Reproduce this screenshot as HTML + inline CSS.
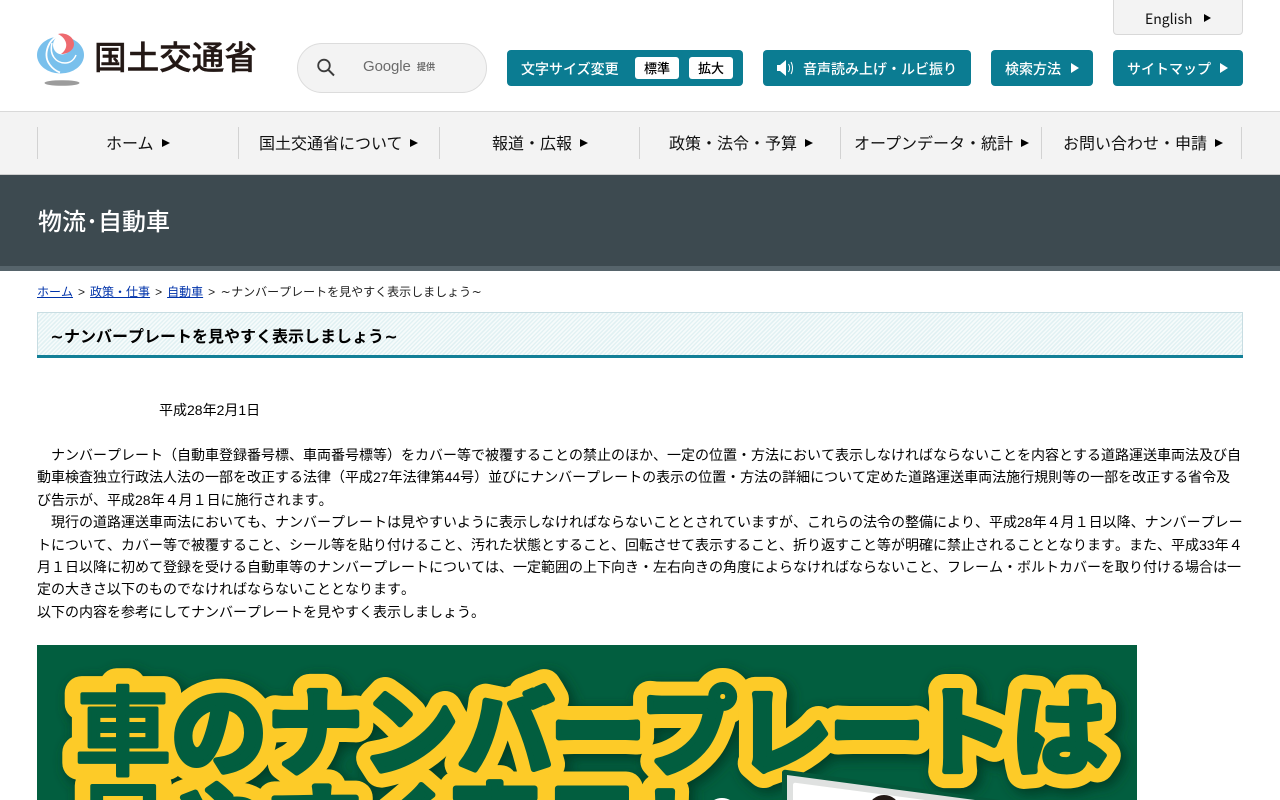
<!DOCTYPE html>
<html lang="ja"><head><meta charset="utf-8"><title>~ナンバープレートを見やすく表示しましょう~</title>
<style>
html,body{margin:0;padding:0;background:#fff}
body{width:1280px;height:800px;overflow:hidden;position:relative;font-family:"Liberation Sans","Noto Sans CJK JP",sans-serif;font-kerning:none;text-spacing-trim:space-all;color:#000}
.a{position:absolute;white-space:nowrap}
.jp{font-family:"Noto Sans CJK JP","Liberation Sans",sans-serif}
.btn{position:absolute;top:50px;height:36px;background:#0b7c92;border-radius:4px;color:#fff;font:500 14px/38px "Noto Sans CJK JP",sans-serif;white-space:nowrap}
.btn span{position:absolute;top:0}
.tri{position:absolute;width:0;height:0;border-style:solid;border-color:transparent transparent transparent #fff}
.nt{border-width:4.5px 0 4.5px 8px;border-left-color:#000;top:138.5px}
.sep{position:absolute;top:127px;width:1px;height:32px;background:#d2d2d2}
.nav{position:absolute;top:129px;font:400 16px/26px "Noto Sans CJK JP",sans-serif;color:#111;white-space:nowrap}
.wb{position:absolute;top:7px;height:22px;width:44px;background:#fff;border-radius:3px;color:#000;text-align:center;font:500 13px/22px "Noto Sans CJK JP",sans-serif}
.t{display:inline-block;text-align:center;font-family:"DejaVu Sans",sans-serif;font-weight:400}
a{color:#0033aa}
</style></head><body>

<svg class="a" style="left:0;top:0" width="100" height="100" viewBox="0 0 100 100">
<ellipse cx="60.5" cy="55" rx="23.5" ry="18.5" fill="#79c0ec"/>
<path d="M58 36C47 41 43 56 50 65C53 69 56 71 60 72.500" stroke="#fff" stroke-width="1.800" fill="none"/>
<path d="M52 43C49 55 56 63 65 63C70 63 74 60 76 55" stroke="#fff" stroke-width="1.500" fill="none"/>
<ellipse cx="62" cy="45" rx="9" ry="9.500" fill="#fff"/>
<path d="M58 34C66 32 74 37 74 44C74 50 68 54 61 54C65 51 67 47 66 43C65 39 62 36 58 34Z" fill="#ee6a6f"/>
<ellipse cx="62" cy="83" rx="17.500" ry="2.800" fill="#9c9c9c"/>
</svg>
<div class="a jp" style="left:94px;top:32px;font-size:32.600px;line-height:48px;font-weight:500;-webkit-text-stroke:.4px #231815;color:#231815">国土交通省</div>

<div class="a" style="left:297px;top:43px;width:188px;height:48px;background:#f3f3f3;border:1px solid #dcdcdc;border-radius:25px"></div>
<svg class="a" style="left:315px;top:56px" width="22" height="22" viewBox="0 0 22 22"><circle cx="9" cy="9.500" r="5.800" fill="none" stroke="#3c3c3c" stroke-width="1.800"/><path d="M13.200 13.700L19 19.500" stroke="#3c3c3c" stroke-width="2" fill="none"/></svg>
<div class="a" style="left:363px;top:57px;font-size:15px;line-height:20px;color:#6b6b6b;letter-spacing:-.1px">Google</div>
<div class="a jp" style="left:417px;top:60px;font-size:9px;line-height:14px;font-weight:700;color:#6b6b6b">提供</div>

<div class="a" style="left:1113px;top:-1px;width:128px;height:34px;background:#f3f3f3;border:1px solid #d8d8d8;border-radius:0 0 4px 4px"></div>
<div class="a jp" style="left:1145px;top:8px;font-size:14px;line-height:22px;color:#111">English</div>
<div class="tri" style="left:1204px;top:14px;border-width:4.500px 0 4.500px 7px;border-left-color:#000"></div>

<div class="btn" style="left:507px;width:236px"><span style="left:14px">文字サイズ変更</span><div class="wb" style="left:128px">標準</div><div class="wb" style="left:182px">拡大</div></div>
<div class="btn" style="left:763px;width:208px">
<svg style="position:absolute;left:13px;top:9px" width="20" height="18" viewBox="0 0 20 18"><path d="M1 6H4L10 1V17L4 12H1Z" fill="#fff"/><path d="M12.500 5C14 7.500 14 10.500 12.500 13M15 3C17 6.500 17 11.500 15 15" fill="none" stroke="#fff" stroke-width="1"/></svg>
<span style="left:40px">音声読み上げ・ルビ振り</span></div>
<div class="btn" style="left:991px;width:102px"><span style="left:14px">検索方法</span><div class="tri" style="left:80px;top:13px;border-width:5px 0 5px 8px"></div></div>
<div class="btn" style="left:1113px;width:130px"><span style="left:14px">サイトマップ</span><div class="tri" style="left:107px;top:13px;border-width:5px 0 5px 8px"></div></div>

<div class="a" style="left:0;top:111px;width:1280px;height:62px;background:#f3f3f3;border-top:1px solid #d9d9d9;border-bottom:1px solid #cfcfcf"></div>
<div class="sep" style="left:37px"></div><div class="sep" style="left:238px"></div><div class="sep" style="left:439px"></div><div class="sep" style="left:639px"></div><div class="sep" style="left:840px"></div><div class="sep" style="left:1041px"></div><div class="sep" style="left:1241px"></div>
<div class="nav" style="left:106px">ホーム</div><div class="tri nt" style="left:162px"></div>
<div class="nav" style="left:259px">国土交通省について</div><div class="tri nt" style="left:410px"></div>
<div class="nav" style="left:492px">報道・広報</div><div class="tri nt" style="left:580px"></div>
<div class="nav" style="left:669px">政策・法令・予算</div><div class="tri nt" style="left:805px"></div>
<div class="nav" style="left:854px">オープンデータ・統計</div><div class="tri nt" style="left:1021px"></div>
<div class="nav" style="left:1063px">お問い合わせ・申請</div><div class="tri nt" style="left:1215px"></div>

<div class="a" style="left:0;top:175px;width:1280px;height:91px;background:#3d4a50"></div>
<div class="a" style="left:0;top:266px;width:1280px;height:5px;background:#56646b"></div>
<div class="a jp" style="left:38px;top:202px;font-size:24px;line-height:36px;font-weight:500;color:#fff">物流･自動車</div>

<div class="a" style="left:37px;top:283px;font-size:12px;line-height:18px;color:#222;word-spacing:1.67px"><a href="#">ホーム</a> &gt; <a href="#">政策・仕事</a> &gt; <a href="#">自動車</a> &gt; <span class="t" style="width:11px">~</span>ナンバープレートを見やすく表示しましょう<span class="t" style="width:11px">~</span></div>

<div class="a" style="left:37px;top:312px;width:1204px;height:42px;border:1px solid #c8dde2;border-bottom:0;background:repeating-linear-gradient(135deg,#e2f1f3 0,#e2f1f3 1.500px,#f6fbfb 1.500px,#f6fbfb 3px)"></div>
<div class="a" style="left:37px;top:355px;width:1206px;height:3px;background:#127f97"></div>
<div class="a" style="left:50px;top:325px;font-size:16px;line-height:24px;font-weight:700"><span class="t" style="width:14px;font-weight:700">~</span>ナンバープレートを見やすく表示しましょう<span class="t" style="width:14px;font-weight:700">~</span></div>

<div class="a" style="left:159px;top:399px;font-size:14px;line-height:22.400px;color:#000">平成28年2月1日</div>
<div class="a" style="left:37px;top:444px;font-size:14px;line-height:22.400px;color:#000">　ナンバープレート（自動車登録番号標、車両番号標等）をカバー等で被覆することの禁止のほか、一定の位置・方法において表示しなければならないことを内容とする道路運送車両法及び自<br>動車検査独立行政法人法の一部を改正する法律（平成27年法律第44号）並びにナンバープレートの表示の位置・方法の詳細について定めた道路運送車両法施行規則等の一部を改正する省令及<br>び告示が、平成28年４月１日に施行されます。<br>　現行の道路運送車両法においても、ナンバープレートは見やすいように表示しなければならないこととされていますが、これらの法令の整備により、平成28年４月１日以降、ナンバープレー<br>トについて、カバー等で被覆すること、シール等を貼り付けること、汚れた状態とすること、回転させて表示すること、折り返すこと等が明確に禁止されることとなります。また、平成33年４<br>月１日以降に初めて登録を受ける自動車等のナンバープレートについては、一定範囲の上下向き・左右向きの角度によらなければならないこと、フレーム・ボルトカバーを取り付ける場合は一<br>定の大きさ以下のものでなければならないこととなります。<br>以下の内容を参考にしてナンバープレートを見やすく表示しましょう。</div>

<svg class="a" style="left:37px;top:645px" width="1100" height="155" viewBox="37 645 1100 155">
<defs><filter id="b" x="-10%" y="-30%" width="120%" height="170%"><feGaussianBlur stdDeviation="6"/></filter></defs>
<rect x="37" y="645" width="1100" height="155" fill="#025e3f"/>
<g font-family="'Noto Sans CJK JP',sans-serif" font-weight="700" font-size="96" text-anchor="middle" stroke-linejoin="round" stroke-linecap="round">
<g fill="#003d28" stroke="#003d28" stroke-width="36" filter="url(#b)" transform="translate(4,4)">
<text x="123 219 315 410 506 598 688 784 877 964 1059" y="767">車のナンバープレートは</text>
<text x="123 219 314 410 495 592 665" y="864">見やすく表示!</text></g>
<g fill="#fdcb28" stroke="#fdcb28" stroke-width="34">
<text x="123 219 315 410 506 598 688 784 877 964 1059" y="767">車のナンバープレートは</text>
<text x="123 219 314 410 495 592 665" y="864">見やすく表示!</text></g>
<g fill="#025e3f" stroke="#025e3f" stroke-width="6">
<text x="219 315 410 506 598 688 784 877 964 1059" y="767">のナンバープレートは</text>
<text x="219 314 410 495 592 665" y="864">やすく表示!</text></g>
<g fill="#025e3f" stroke="#025e3f" stroke-width="4" font-weight="500">
<text x="123" y="767">車</text>
<text x="123" y="864">見</text></g>
</g>
<path d="M782 772Q783 769 787 770L1000 800H782Z" fill="#04583b"/>
<path d="M787 775L975 800H787Z" fill="#dfe1e0"/>
<path d="M793 785Q793 782 797 783L925 800H793Z" fill="#fff"/>
<ellipse cx="884" cy="808" rx="15" ry="13" fill="#231815"/>
<ellipse cx="722" cy="806" rx="12" ry="8" fill="#fff"/>
</svg>
</body></html>
